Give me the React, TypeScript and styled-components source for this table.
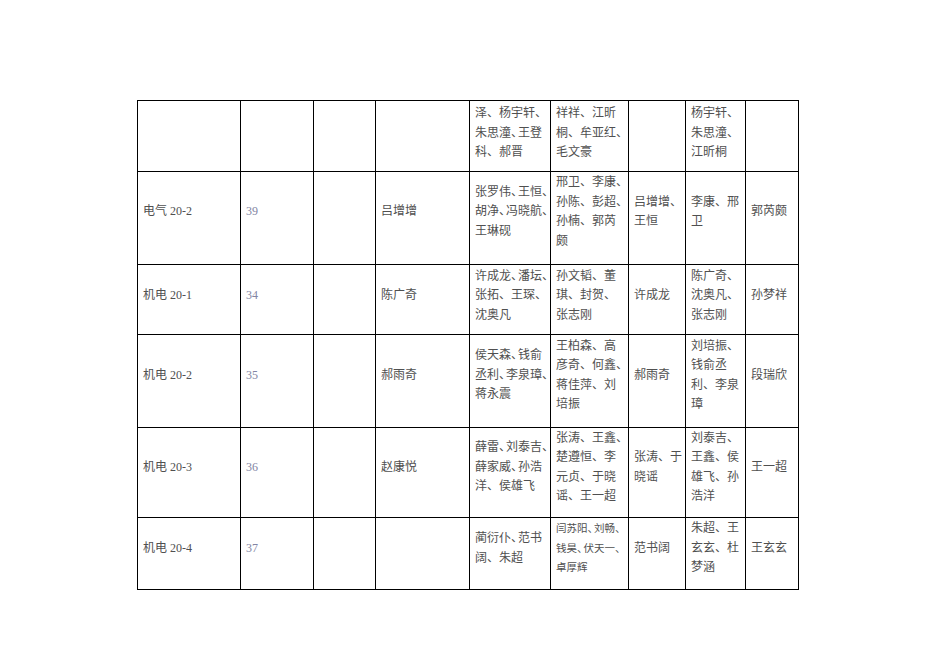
import styled, { createGlobalStyle } from "styled-components";

const GlobalStyle = createGlobalStyle`
  html, body {
    margin: 0;
    padding: 0;
    background: #ffffff;
  }
  body {
    font-family: "Liberation Serif", "Noto Sans CJK SC", serif;
  }
`;

const Page = styled.div`
  width: 936px;
  height: 662px;
  box-sizing: border-box;
  padding: 100px 0 0 137px;
  background: #ffffff;
`;

const Sheet = styled.div`
  display: grid;
  grid-template-columns: 102px 72px 61px 93px 80px 77px 56px 59px 52px;
  grid-template-rows: 70px 92px 69px 92px 89px 71px;
  gap: 1px;
  padding: 1px;
  width: max-content;
  background: #000000;
`;

const Cell = styled.div<{ $pb: number }>`
  display: flex;
  flex-direction: column;
  justify-content: center;
  box-sizing: border-box;
  padding: 1px 3px ${(p) => p.$pb}px 5px;
  background: #ffffff;
  color: #505050;
  font-size: 12px;
  line-height: 19.5px;
  overflow: visible;
`;

const Line = styled.div<{ $small?: boolean }>`
  white-space: nowrap;
  font-size: ${(p) => (p.$small ? "10.5px" : "12px")};
`;

const Num = styled.span`
  color: #8285a3;
`;

const Tight = styled.span<{ $small?: boolean }>`
  letter-spacing: ${(p) => (p.$small ? "-4px" : "-5px")};
`;

// "|" in a line marks a compressed 、
function TextLine({ text, small }: { text: string; small?: boolean }) {
  const parts = text.split("|");
  return (
    <Line $small={small}>
      {parts.map((part, i) => (
        <span key={i}>
          {part}
          {i < parts.length - 1 ? <Tight $small={small}>、</Tight> : null}
        </span>
      ))}
    </Line>
  );
}

interface RowData {
  cls: string;
  count: string;
  leader: string;
  members: string[];
  helpers: string[];
  small?: boolean;
  checker: string[];
  team: string[];
  head: string;
  pb: number;
}

const rows: RowData[] = [
  {
    cls: "",
    count: "",
    leader: "",
    members: ["泽、杨宇轩、", "朱思潼|王登", "科、郝晋"],
    helpers: ["祥祥、江昕", "桐、牟亚红、", "毛文豪"],
    checker: [],
    team: ["杨宇轩、", "朱思潼、", "江昕桐"],
    head: "",
    pb: 6,
  },
  {
    cls: "电气 20-2",
    count: "39",
    leader: "吕增增",
    members: ["张罗伟|王恒、", "胡净|冯晓航、", "王琳砚"],
    helpers: ["邢卫、李康、", "孙陈、彭超、", "孙楠、郭芮", "颇"],
    checker: ["吕增增、", "王恒"],
    team: ["李康、邢", "卫"],
    head: "郭芮颇",
    pb: 13,
  },
  {
    cls: "机电 20-1",
    count: "34",
    leader: "陈广奇",
    members: ["许成龙|潘坛、", "张拓、王琛、", "沈奥凡"],
    helpers: ["孙文韬、董", "琪、封贺、", "张志刚"],
    checker: ["许成龙"],
    team: ["陈广奇、", "沈奥凡、", "张志刚"],
    head: "孙梦祥",
    pb: 8,
  },
  {
    cls: "机电 20-2",
    count: "35",
    leader: "郝雨奇",
    members: ["侯天森|钱俞", "丞利|李泉璋、", "蒋永震"],
    helpers: ["王柏森、高", "彦奇、何鑫、", "蒋佳萍、刘", "培振"],
    checker: ["郝雨奇"],
    team: ["刘培振、", "钱俞丞", "利、李泉", "璋"],
    head: "段瑞欣",
    pb: 12,
  },
  {
    cls: "机电 20-3",
    count: "36",
    leader: "赵康悦",
    members: ["薛雷|刘泰吉、", "薛家威|孙浩", "洋、侯雄飞"],
    helpers: ["张涛、王鑫、", "楚遵恒、李", "元贞、于晓", "谣、王一超"],
    checker: ["张涛、于", "晓谣"],
    team: ["刘泰吉、", "王鑫、侯", "雄飞、孙", "浩洋"],
    head: "王一超",
    pb: 11,
  },
  {
    cls: "机电 20-4",
    count: "37",
    leader: "",
    members: ["蔺衍仆|范书", "阔、朱超"],
    helpers: ["闫苏阳|刘畅、", "钱昊|伏天一、", "卓厚辉"],
    small: true,
    checker: ["范书阔"],
    team: ["朱超、王", "玄玄、杜", "梦涵"],
    head: "王玄玄",
    pb: 11,
  },
];

function Lines({ lines, small, pb }: { lines: string[]; small?: boolean; pb: number }) {
  return (
    <Cell $pb={pb}>
      {lines.map((l, i) => (
        <TextLine key={i} text={l} small={small} />
      ))}
    </Cell>
  );
}

export default function App() {
  return (
    <>
      <GlobalStyle />
      <Page>
        <Sheet>
          {rows.map((r, i) => (
            <div key={i} style={{ display: "contents" }}>
              <Lines lines={r.cls ? [r.cls] : []} pb={r.pb} />
              <Cell $pb={r.pb}>
                <Line>
                  <Num>{r.count}</Num>
                </Line>
              </Cell>
              <Cell $pb={r.pb} />
              <Lines lines={r.leader ? [r.leader] : []} pb={r.pb} />
              <Lines lines={r.members} pb={r.pb} />
              <Lines lines={r.helpers} small={r.small} pb={r.pb} />
              <Lines lines={r.checker} pb={r.pb} />
              <Lines lines={r.team} pb={r.pb} />
              <Lines lines={r.head ? [r.head] : []} pb={r.pb} />
            </div>
          ))}
        </Sheet>
      </Page>
    </>
  );
}
